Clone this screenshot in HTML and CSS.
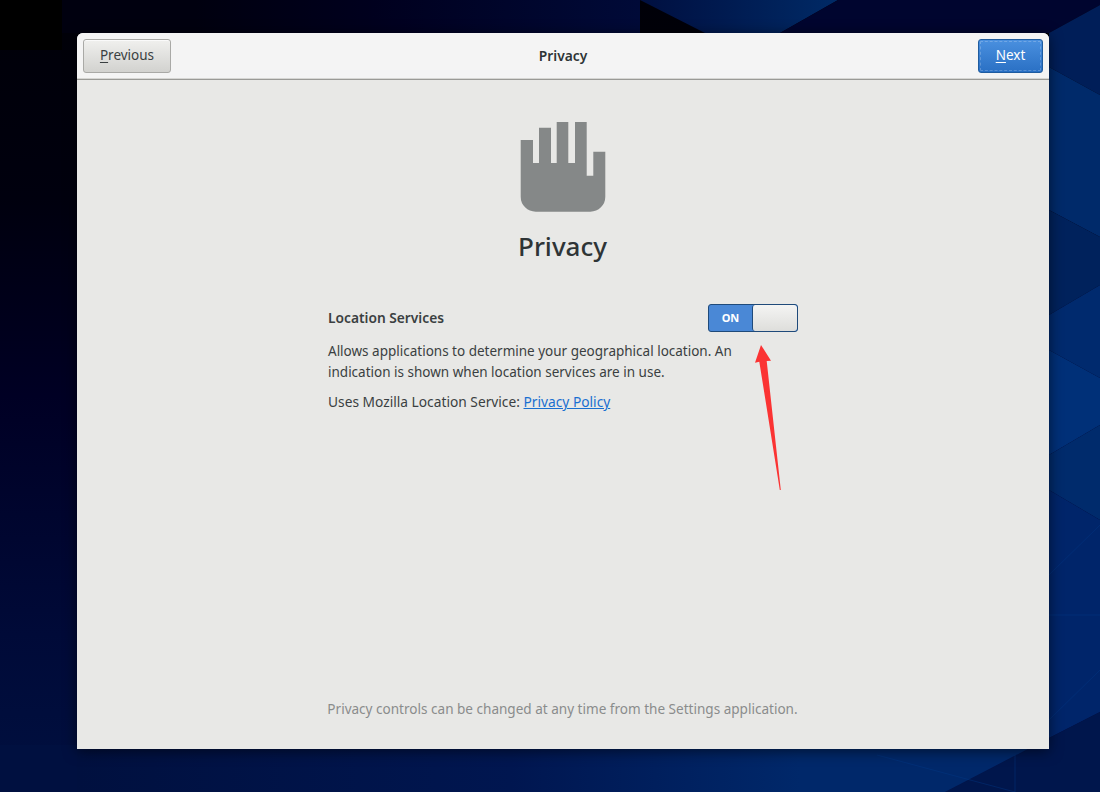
FILE: index.html
```html
<!DOCTYPE html>
<html lang="en">
<head>
<meta charset="utf-8">
<title>Privacy</title>
<link rel="stylesheet" href="styles.css">
</head>
<body>
<svg class="wallpaper" viewBox="0 0 1100 792" aria-hidden="true">
  <defs>
    <linearGradient id="left" x1="0" y1="0" x2="0" y2="1">
      <stop offset="0" stop-color="#000008"/>
      <stop offset="0.25" stop-color="#00000e"/>
      <stop offset="0.5" stop-color="#000024"/>
      <stop offset="0.8" stop-color="#000a38"/>
      <stop offset="1" stop-color="#001040"/>
    </linearGradient>
    <linearGradient id="bottom" x1="0" y1="0" x2="1" y2="0">
      <stop offset="0" stop-color="#00103f"/>
      <stop offset="0.6" stop-color="#001650"/>
      <stop offset="1" stop-color="#00286a"/>
    </linearGradient>
    <linearGradient id="top" x1="0" y1="0" x2="1" y2="0">
      <stop offset="0" stop-color="#00000f"/>
      <stop offset="0.4" stop-color="#00001e"/>
      <stop offset="1" stop-color="#000a38"/>
    </linearGradient>
    <linearGradient id="topband" x1="0" y1="0" x2="1" y2="0">
      <stop offset="0" stop-color="#000f40"/>
      <stop offset="1" stop-color="#002a66"/>
    </linearGradient>
  </defs>
  <rect width="1100" height="792" fill="url(#left)"/>
  <rect x="0" y="0" width="62" height="50" fill="#000000"/>
  <rect x="195" y="0" width="445" height="33" fill="url(#top)"/>
  <rect x="62" y="0" width="133" height="33" fill="#00000f"/>
  <polygon points="640,0 838,0 780,33 705,33" fill="url(#topband)"/>
  <polygon points="838,0 1100,0 1100,5 1049,33 780,33" fill="#00052f"/>
  <polygon points="1049,33 1100,5 1100,95 1049,67" fill="#001e58"/>
  <polygon points="1049,67 1100,95 1100,237 1049,210" fill="#002a6a"/>
  <polygon points="1049,210 1100,237 1100,285 1049,315" fill="#00225c"/>
  <polygon points="1049,315 1100,285 1100,378 1049,350" fill="#002a6e"/>
  <polygon points="1049,350 1100,378 1100,425 1049,455" fill="#003078"/>
  <polygon points="1049,455 1100,425 1100,520 1049,490" fill="#002b6c"/>
  <polygon points="1049,490 1100,520 1100,712 1049,738" fill="#00256a"/>
  <polygon points="1049,738 1100,712 1100,792 945,792" fill="#00164c"/>
  <polygon points="77,749 800,749 800,792 77,792" fill="url(#bottom)"/>
  <polygon points="800,749 1049,749 1049,738 945,792 800,792" fill="#00286a"/>
  <rect x="0" y="745" width="77" height="47" fill="#001040"/>
  <g class="facets">
    <line x1="1049" y1="615" x2="1100" y2="615"/>
    <line x1="877" y1="755" x2="1015" y2="792"/>
    <line x1="1015" y1="755" x2="1015" y2="792"/>
    <line x1="1049" y1="575" x2="1100" y2="525"/>
    <line x1="1049" y1="720" x2="1100" y2="670"/>
  </g>
</svg>

<main class="window">
  <header class="titlebar">
    <div class="bar-start"><button class="btn"><span class="mnemonic">P</span>revious</button></div>
    <h1 class="bar-title">Privacy</h1>
    <div class="bar-end"><button class="btn btn-primary"><span class="mnemonic">N</span>ext</button></div>
  </header>

  <section class="content">
    <svg class="hand" viewBox="0 0 86 90" aria-hidden="true">
      <path d="M0.7 18H13V41H19V5.7H31V41H36.7V0H48.3V41H55V0H66.7V53.7H73.3V29.7H85.3V74.7A15 15 0 0 1 70.3 89.7H15.7A15 15 0 0 1 0.7 74.7Z" fill="#858888"/>
    </svg>
    <h2 class="heading">Privacy</h2>

    <div class="panel">
      <div class="setting-row">
        <span class="setting-label">Location Services</span>
        <div class="toggle">
          <span class="toggle-on">ON</span>
          <span class="toggle-knob"></span>
        </div>
      </div>
      <p class="desc">Allows applications to determine your geographical location. An indication is shown when location services are in use.</p>
      <p class="desc policy">Uses Mozilla Location Service: <a class="link" href="#">Privacy Policy</a></p>
    </div>

    <p class="footnote">Privacy controls can be changed at any time from the Settings application.</p>
  </section>
</main>

<svg class="arrow" viewBox="0 0 30 150" aria-hidden="true">
  <polygon points="11,0 5,17.7 9.3,16.7 29.8,145 30.8,145 16.7,16 21,15.7" fill="#fb3333"/>
</svg>
</body>
</html>
```
FILE: styles.css
```css
* { box-sizing: border-box; }

html, body {
  margin: 0;
  width: 1100px;
  height: 792px;
  overflow: hidden;
  background: #00103f;
}

body {
  position: relative;
  font-family: "Noto Sans", "Open Sans", sans-serif;
  font-size: 13.5px;
  color: #3a3f41;
}

.wallpaper {
  position: absolute;
  inset: 0;
  width: 1100px;
  height: 792px;
  display: block;
}

.facets line {
  stroke: #003a88;
  stroke-width: 1;
  opacity: .4;
}

.window {
  position: absolute;
  left: 77px;
  top: 33px;
  width: 972px;
  height: 716px;
  display: flex;
  flex-direction: column;
  background: #e8e8e6;
  border-radius: 6px 6px 0 0;
  box-shadow: 0 2px 14px rgba(0, 0, 0, .55);
}

.titlebar {
  flex: none;
  height: 47px;
  display: grid;
  grid-template-columns: 1fr auto 1fr;
  align-items: start;
  padding: 6px 6px 0;
  background: #f4f4f4;
  border-bottom: 1px solid #9a9a96;
  border-radius: 6px 6px 0 0;
  box-shadow: inset 0 -1px 0 #d6d6d3;
}

.bar-end { display: flex; justify-content: flex-end; }

.bar-title {
  margin: 0;
  line-height: 34px;
  font-size: 13.8px;
  font-weight: 600;
  color: #2e3436;
}

.btn {
  height: 34px;
  padding: 0 0 3px;
  font: inherit;
  font-size: 13.5px;
  border-radius: 3px;
  width: 88px;
  color: #3a3f41;
  border: 1px solid #a9a9a6;
  background: linear-gradient(#f0f0ee, #d2d2cf);
  box-shadow: inset 0 1px 0 #fafafa;
}

.mnemonic { text-decoration: underline; text-underline-offset: 2px; text-decoration-thickness: 1px; }

.btn-primary {
  width: 65px;
  color: #fff;
  border-color: #1f5c9f;
  background: linear-gradient(#4a90df, #2a70c4);
  outline: 1px dashed rgba(255, 255, 255, .22);
  outline-offset: -3px;
  box-shadow: none;
}

.content {
  flex: 1;
  display: flex;
  flex-direction: column;
  align-items: center;
  padding-top: 42px;
  padding-bottom: 30px;
}

.hand {
  display: block;
  width: 86px;
  height: 90px;
}

.heading {
  margin: 16px 1px 0 0;
  font-size: 26px;
  line-height: 36px;
  font-weight: 500;
  color: #2e3436;
}

.panel {
  width: 470px;
  margin-top: 40px;
}

.setting-row {
  display: flex;
  justify-content: space-between;
  align-items: flex-start;
  height: 28px;
}

.setting-label {
  font-size: 13.75px;
  font-weight: 600;
  line-height: 27px;
}

.toggle {
  width: 90px;
  height: 28px;
  display: flex;
  border: 1px solid #1f4a7a;
  border-radius: 3px;
  overflow: hidden;
  background: #4a88d6;
}

.toggle-on {
  width: 43px;
  text-align: center;
  line-height: 25px;
  font-size: 11px;
  font-weight: 700;
  color: #fff;
}

.toggle-knob {
  flex: 1;
  border-left: 1px solid #1f4a7a;
  border-radius: 3px;
  background: linear-gradient(#f4f4f3, #dededb);
}

.desc {
  margin: 0;
  max-width: 420px;
  font-size: 13.5px;
  line-height: 21px;
}

.setting-row + .desc { margin-top: 9px; }

.desc.policy {
  margin-top: 8px;
  max-width: none;
  font-size: 13.75px;
}

.link { color: #1a6fd0; text-decoration: underline; }

.footnote {
  margin: auto 1px 0 0;
  font-size: 13.55px;
  line-height: 20px;
  color: #8a8c8c;
}

.arrow {
  position: absolute;
  left: 750px;
  top: 345px;
  width: 30px;
  height: 150px;
  overflow: visible;
}
```
